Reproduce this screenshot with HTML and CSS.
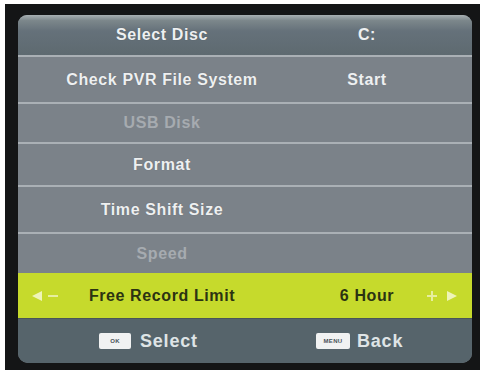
FILE: index.html
```html
<!DOCTYPE html>
<html>
<head>
<meta charset="utf-8">
<link rel="stylesheet" href="styles.css">
</head>
<body>
<div class="frame">
  <div class="panel">
    <div class="row head h40">
      <span class="label">Select Disc</span>
      <span class="value">C:</span>
    </div>
    <div class="row sep h47">
      <span class="label">Check PVR File System</span>
      <span class="value">Start</span>
    </div>
    <div class="row sep h40">
      <span class="label dim">USB Disk</span>
    </div>
    <div class="row sep h43">
      <span class="label">Format</span>
    </div>
    <div class="row sep h47">
      <span class="label">Time Shift Size</span>
    </div>
    <div class="row sep h41">
      <span class="label dim">Speed</span>
    </div>
    <div class="row active h45">
      <span class="larrows"><span class="tri tri-l"></span><span class="minus"></span></span>
      <span class="label">Free Record Limit</span>
      <span class="value">6 Hour</span>
      <span class="rarrows"><span class="plus"></span><span class="tri tri-r"></span></span>
    </div>
    <div class="footer">
      <div class="hint"><span class="key key-ok">OK</span><span class="htext">Select</span></div>
      <div class="hint"><span class="key key-menu">MENU</span><span class="htext">Back</span></div>
    </div>
  </div>
</div>
</body>
</html>
```
FILE: styles.css
```css
html, body {
  margin: 0;
  padding: 0;
  background: #ffffff;
}
body {
  width: 485px;
  height: 370px;
  overflow: hidden;
  font-family: "Liberation Sans", Arial, sans-serif;
}
.frame {
  margin: 4px 0 0 5px;
  width: 475px;
  height: 366px;
  background: #141516;
  padding: 11px 8px 0 13px;
  box-sizing: border-box;
}
.panel {
  width: 454px;
  border-radius: 9px 9px 10px 10px;
  overflow: hidden;
  background: #7b8289;
  display: flex;
  flex-direction: column;
}
.row {
  display: grid;
  grid-template-columns: 288px 122px 1fr;
  align-items: center;
  box-sizing: border-box;
  font-weight: bold;
  font-size: 16px;
  letter-spacing: 0.6px;
  color: #eef0f1;
}
.h40 { height: 40px; }
.h41 { height: 41px; }
.h43 { height: 43px; }
.h45 { height: 45px; }
.h47 { height: 47px; }
.head {
  background: linear-gradient(#a7afb2 0%, #7c878b 14%, #65717a 40%, #5e6a70 100%);
}
.sep {
  border-top: 2px solid #aab0b5;
  background: #7b8289;
}
.label {
  grid-column: 1;
  grid-row: 1;
  justify-self: center;
  text-shadow: 0 0 1px rgba(0,0,0,0.25);
}
.value {
  grid-column: 2;
  grid-row: 1;
  justify-self: center;
}
.dim {
  color: #a6abb0;
  text-shadow: none;
}
.active {
  background: #c6da2c;
  color: #2c3312;
}
.active .label, .active .value {
  text-shadow: none;
}
.larrows {
  grid-column: 1;
  grid-row: 1;
  justify-self: start;
  margin-left: 14px;
  display: flex;
  align-items: center;
  gap: 6px;
}
.rarrows {
  grid-column: 3;
  grid-row: 1;
  justify-self: start;
  margin-left: -1px;
  display: flex;
  align-items: center;
  gap: 10px;
}
.tri {
  width: 0;
  height: 0;
  border-top: 5px solid transparent;
  border-bottom: 5px solid transparent;
}
.tri-l { border-right: 10px solid #eef4b8; }
.tri-r { border-left: 10px solid #eef4b8; }
.minus {
  width: 10px;
  height: 2px;
  background: #e6eea0;
}
.plus {
  position: relative;
  width: 10px;
  height: 10px;
  background:
    linear-gradient(#e6eea0, #e6eea0) center / 10px 2px no-repeat,
    linear-gradient(#e6eea0, #e6eea0) center / 2px 10px no-repeat;
}
.footer {
  height: 45px;
  background: #56646b;
  border-top: 1px solid #4a5558;
  box-sizing: border-box;
  display: grid;
  grid-template-columns: 288px 1fr;
  align-items: center;
}
.hint {
  display: flex;
  align-items: center;
  gap: 9px;
}
.hint:first-child { margin-left: 81px; }
.hint:last-child { margin-left: 10px; }
.key {
  background: #f1f2f2;
  color: #4a5358;
  border-radius: 2px;
  height: 16px;
  display: flex;
  align-items: center;
  justify-content: center;
  font-size: 6px;
  font-weight: bold;
  letter-spacing: 0.3px;
}
.key-ok { width: 32px; }
.key-menu { width: 34px; margin-right: -2px; }
.htext {
  font-size: 18px;
  font-weight: bold;
  letter-spacing: 0.8px;
  color: #dfe4e6;
}
```
